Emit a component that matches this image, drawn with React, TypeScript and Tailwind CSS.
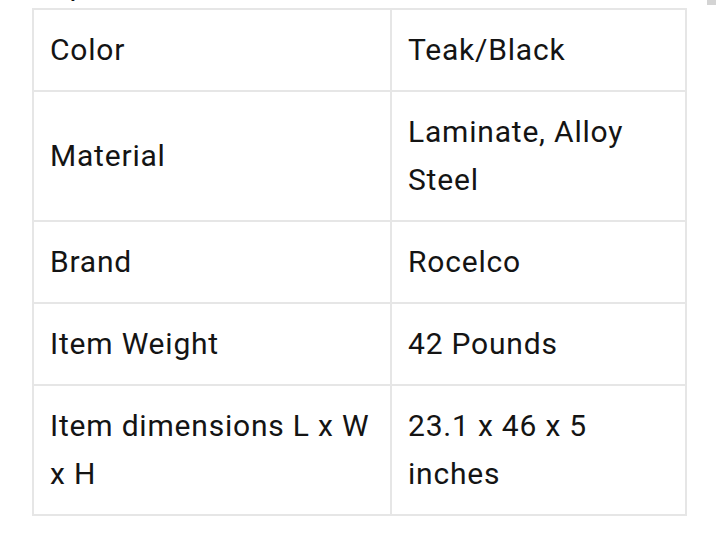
import React from 'react';

const rows: [string, string][] = [
    ['Color', 'Teak/Black'],
    ['Material', 'Laminate, Alloy Steel'],
    ['Brand', 'Rocelco'],
    ['Item Weight', '42 Pounds'],
    ['Item dimensions L x W x H', '23.1 x 46 x 5 inches'],
];

export default function App() {
    return (
        <div className="relative min-h-[541px] w-[719px] bg-white text-[#141414]" style={{ fontFamily: 'Roboto, "Liberation Sans", sans-serif' }}>
            {/* cut-off heading from above, only the descender shows */}
            <div className="h-[8px] overflow-hidden pl-[51px]">
                <div className="mt-[-39px] text-[30px] leading-[48px] tracking-[0.8px]">Specifications</div>
            </div>
            <div className="absolute right-[3px] top-0 h-[5px] w-[9px] bg-[#d4d4d4]" />
            <table className="ml-[32px] w-[655px] table-fixed border-collapse text-[30px] leading-[48px] tracking-[0.8px]">
                <colgroup>
                    <col className="w-[358px]" />
                    <col />
                </colgroup>
                <tbody>
                    {rows.map(([k, v]) => (
                        <tr key={k}>
                            <td className="border-2 border-[#e6e6e6] px-4 py-4 align-middle">{k}</td>
                            <td className="border-2 border-[#e6e6e6] px-4 py-4 align-middle">{v}</td>
                        </tr>
                    ))}
                </tbody>
            </table>
        </div>
    );
}
